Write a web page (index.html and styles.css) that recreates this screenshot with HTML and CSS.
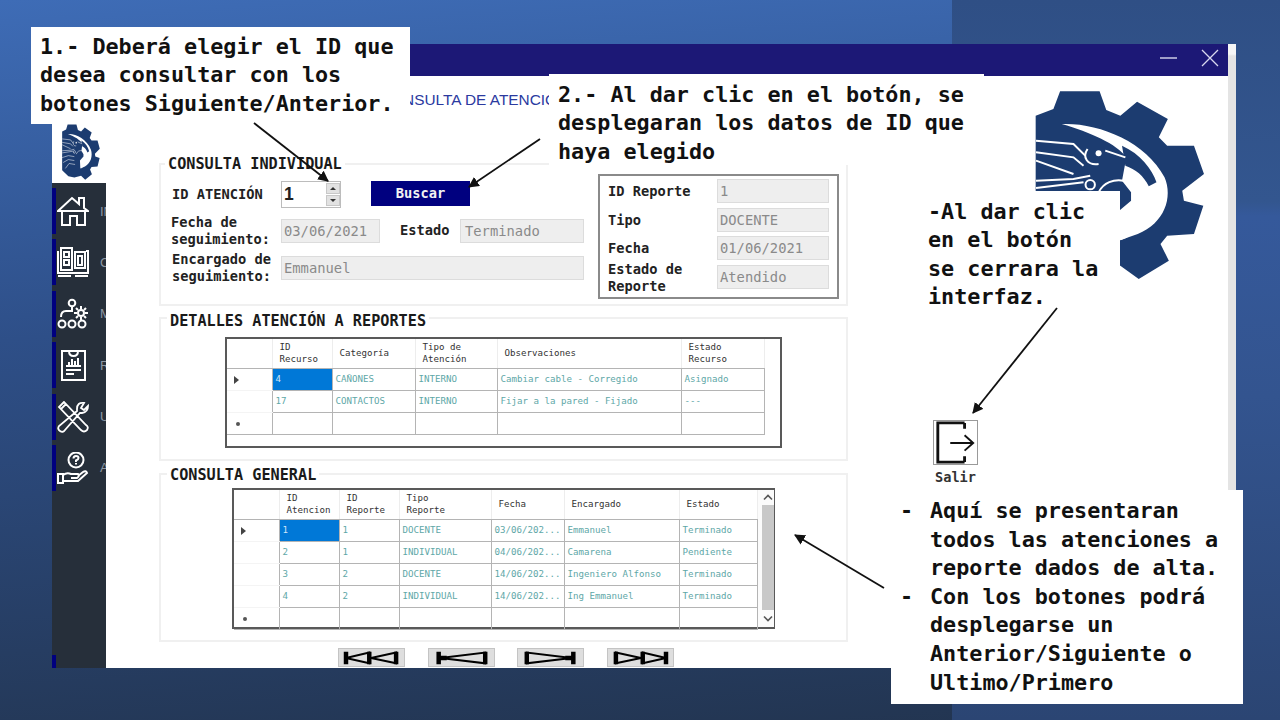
FILE: index.html
```html
<!DOCTYPE html>
<html lang="es">
<head>
<meta charset="utf-8">
<title>Consulta de atención a reportes</title>
<link rel="stylesheet" href="styles.css">
</head>
<body>
<svg class="defs" aria-hidden="true">
  <symbol id="logo" viewBox="555 268 508 570" preserveAspectRatio="none">
    <path class="logo-gear" d="M557 345 L610 325 L630 272 L748 272 L768 328 L810 345 L860 303 L952 355 L925 410 L950 435 L1030 435 L1060 520 L995 570 L1000 600 L1058 615 L1030 700 L950 705 L930 730 L955 780 L865 835 L810 795 L720 812 L640 800 L557 740 Z"/>
    <path class="logo-white" d="M635 370 C740 365 885 420 942 530 C968 590 942 668 862 700 L800 722 L795 640 L842 600 L842 575 L815 540 L828 470 C800 430 720 395 635 370 Z"/>
    <path class="logo-gear" d="M815 435 C870 460 905 505 918 545 L895 557 C880 525 855 505 825 495 Z"/>
    <path class="logo-line" d="M765 450 L825 470"/>
    <path class="logo-line" d="M558 420 L670 430 L705 465 M558 455 L670 470 L700 495 M558 480 L670 520 M558 540 L670 535 L720 525 M558 562 L700 545 M557 610 L640 590 L720 600 M570 660 L640 630 L720 640 M600 720 L650 670 L730 680"/>
    <path class="logo-line" d="M712 445 C695 470 712 495 745 490"/>
    <circle class="logo-dot" cx="745" cy="458" r="9"/>
    <circle class="logo-line" cx="720" cy="552" r="14"/>
    <path class="logo-line" d="M745 575 C760 545 790 535 820 540"/>
    <path class="logo-line" d="M810 650 C860 650 865 700 810 716"/>
  </symbol>
</svg>

<main class="slide">
  <div class="slide-panel"></div>

  <div class="scroll-strip"></div>

  <article class="window">
    <header class="titlebar">
      <svg class="win-icon" viewBox="0 0 17 17"><path d="M0 9 H17"/></svg>
      <svg class="win-icon win-close" viewBox="0 0 18 18"><path d="M1 1 L17 17 M17 1 L1 17"/></svg>
    </header>
    <div class="window-body">
      <aside class="rail">
        <div class="rail-logo"><svg class="logo-small"><use href="#logo"/></svg></div>
        <nav class="sidebar">
          <div class="nav-item">
            <svg class="nav-icon" viewBox="0 0 32 32"><path d="M1 16 L15 3 L22 9 V3 H27 V13 L31 16 Z M5 16 V30 H13 V21 H20 V30 H28 V16"/></svg>
            <span>IN</span>
          </div>
          <div class="nav-item">
            <svg class="nav-icon" viewBox="0 0 32 32"><path d="M1 5 V27 H31 V5 H29 M4 2 H15 V24 H4 Z M7 6 H12 V11 H7 Z M7 14 H12 V19 H7 Z M18 6 H28 V22 H18 Z M21 10 H25 V19 H21 Z M1 30 H14 M18 30 H31"/></svg>
            <span>C</span>
          </div>
          <div class="nav-item">
            <svg class="nav-icon" viewBox="0 0 32 32"><circle cx="15" cy="5" r="3.3"/><path d="M15 9 V13 H9 Q4 13 4 19"/><circle cx="24" cy="15" r="3"/><path d="M24 8 V11 M24 19 V22 M17 15 H20 M28 15 H31 M19 10 L21 12 M27 18 L29 20 M29 10 L27 12 M21 18 L19 20"/><circle cx="5" cy="26" r="3.5"/><circle cx="15" cy="26" r="3.5"/><circle cx="25" cy="26" r="3.5"/></svg>
            <span>M</span>
          </div>
          <div class="nav-item">
            <svg class="nav-icon" viewBox="0 0 32 32"><path d="M5 2 H28 V31 H5 Z M12 2 Q12 7 16.5 7 Q21 7 21 2 M9 17 H24 M9 21 H24 M9 25 H17 M12 16 V13 M15 16 V10 M18 16 V12 M21 16 V9"/></svg>
            <span>R</span>
          </div>
          <div class="nav-item">
            <svg class="nav-icon nav-icon-tools" viewBox="0 0 32 32"><path d="M7 1 L2 6 L24 29 Q27 32 30 29 Q32 26 29 24 Z M4 8 L9 3 M27 2 Q20 1 20 8 L20 10 L2 25 Q0 28 3 30 Q6 32 8 29 L23 12 L25 12 Q31 11 31 5 L27 9 L24 7 Z"/></svg>
            <span>U</span>
          </div>
          <div class="nav-item">
            <svg class="nav-icon" viewBox="0 0 32 32"><circle cx="19" cy="8" r="7.5"/><path d="M16.5 6.5 Q16.5 4 19 4 Q21.5 4 21.5 6 Q21.5 7.5 19 8.5 V10 M19 11 V12.5"/><path d="M1 22 H6 V31 H1 Z M6 23 Q10 20 14 22 H21 Q23 24 20 26 H14 M6 29 H21 L30 21 Q29 18 26 20 L21 24"/></svg>
            <span>A</span>
          </div>
          <div class="nav-item nav-item-last">
            <svg class="nav-icon" viewBox="0 0 32 32"><circle cx="18" cy="16" r="9"/></svg>
          </div>
        </nav>
      </aside>

      <div class="content">
        <h1 class="page-title">CONSULTA DE ATENCIÓN A REPORTES</h1>

        <section class="group group-one">
          <h2 class="legend legend-one">CONSULTA INDIVIDUAL</h2>
          <div class="individual">
            <form class="form">
              <label class="form-label form-label-id">ID ATENCIÓN</label>
              <div class="spinner">
                <span class="spinner-value">1</span>
                <span class="spinner-buttons">
                  <span class="spin spin-up"></span>
                  <span class="spin spin-down"></span>
                </span>
              </div>
              <button type="button" class="search">Buscar</button>

              <label class="form-label">Fecha de<br>seguimiento:</label>
              <span class="field field-date">03/06/2021</span>
              <label class="form-label form-label-state">Estado</label>
              <span class="field field-state">Terminado</span>

              <label class="form-label form-label-owner">Encargado de<br>seguimiento:</label>
              <span class="field field-owner">Emmanuel</span>
            </form>
            <div class="report">
              <label class="form-label">ID Reporte</label><span class="field">1</span>
              <label class="form-label">Tipo</label><span class="field">DOCENTE</span>
              <label class="form-label">Fecha</label><span class="field">01/06/2021</span>
              <label class="form-label">Estado de<br>Reporte</label><span class="field">Atendido</span>
            </div>
          </div>
        </section>

        <section class="group group-two">
          <h2 class="legend legend-two">DETALLES ATENCIÓN A REPORTES</h2>
          <div class="grid-frame grid-frame-one">
            <table class="grid grid-one">
              <colgroup>
                <col class="c45"><col class="c60"><col class="c83"><col class="c82"><col class="c184"><col class="c83">
              </colgroup>
              <thead>
                <tr><th></th><th>ID<br>Recurso</th><th>Categoría</th><th>Tipo de<br>Atención</th><th>Observaciones</th><th>Estado<br>Recurso</th></tr>
              </thead>
              <tbody>
                <tr><td class="row-head row-current"></td><td class="selected">4</td><td>CAÑONES</td><td>INTERNO</td><td>Cambiar cable - Corregido</td><td>Asignado</td></tr>
                <tr><td class="row-head"></td><td>17</td><td>CONTACTOS</td><td>INTERNO</td><td>Fijar a la pared - Fijado</td><td>---</td></tr>
                <tr><td class="row-head row-new"></td><td></td><td></td><td></td><td></td><td></td></tr>
              </tbody>
            </table>
          </div>
        </section>

        <section class="group group-three">
          <h2 class="legend">CONSULTA GENERAL</h2>
          <div class="grid-frame grid-frame-two">
            <table class="grid grid-two">
              <colgroup>
                <col class="c45"><col class="c60"><col class="c60"><col class="c92"><col class="c73"><col class="c115"><col class="c78">
              </colgroup>
              <thead>
                <tr><th></th><th>ID<br>Atencion</th><th>ID<br>Reporte</th><th>Tipo<br>Reporte</th><th>Fecha</th><th>Encargado</th><th>Estado</th></tr>
              </thead>
              <tbody>
                <tr><td class="row-head row-current"></td><td class="selected">1</td><td>1</td><td>DOCENTE</td><td>03/06/202...</td><td>Emmanuel</td><td>Terminado</td></tr>
                <tr><td class="row-head"></td><td>2</td><td>1</td><td>INDIVIDUAL</td><td>04/06/202...</td><td>Camarena</td><td>Pendiente</td></tr>
                <tr><td class="row-head"></td><td>3</td><td>2</td><td>DOCENTE</td><td>14/06/202...</td><td>Ingeniero Alfonso</td><td>Terminado</td></tr>
                <tr><td class="row-head"></td><td>4</td><td>2</td><td>INDIVIDUAL</td><td>14/06/202...</td><td>Ing Emmanuel</td><td>Terminado</td></tr>
                <tr><td class="row-head row-new"></td><td></td><td></td><td></td><td></td><td></td><td></td></tr>
              </tbody>
            </table>
            <div class="scrollbar">
              <svg class="scroll-arrow" viewBox="0 0 10 6"><path d="M1 5 L5 1 L9 5"/></svg>
              <div class="scroll-thumb"></div>
              <svg class="scroll-arrow" viewBox="0 0 10 6"><path d="M1 1 L5 5 L9 1"/></svg>
            </div>
          </div>
        </section>

        <div class="pager">
          <button type="button" class="page-btn" aria-label="Primero"><svg viewBox="0 0 67 19"><path class="pg-thick" d="M5 3 V17 M31 3 V17 M61 3 V17"/><path class="pg-thin" d="M5 10 L31 4 V16 Z M33 10 L61 4 V16 Z"/></svg></button>
          <button type="button" class="page-btn" aria-label="Anterior"><svg viewBox="0 0 67 19"><path class="pg-thick" d="M8 3 V17 M60 3 V17 M8 10 H17"/><path class="pg-thin" d="M10 10 L60 4 V16 Z"/></svg></button>
          <button type="button" class="page-btn" aria-label="Siguiente"><svg viewBox="0 0 67 19"><path class="pg-thick" d="M59 3 V17 M7 3 V17 M50 10 H59"/><path class="pg-thin" d="M57 10 L7 4 V16 Z"/></svg></button>
          <button type="button" class="page-btn" aria-label="Último"><svg viewBox="0 0 67 19"><path class="pg-thick" d="M62 3 V17 M36 3 V17 M6 3 V17"/><path class="pg-thin" d="M62 10 L36 4 V16 Z M34 10 L6 4 V16 Z"/></svg></button>
        </div>
      </div>

      <div class="side">
        <svg class="logo-big"><use href="#logo"/></svg>
        <div class="exit">
          <div class="exit-box">
            <svg viewBox="0 0 45 45"><path class="exit-door" d="M32 2 V8 M32 37 V43 M32 2 H4 V43 H32"/><path class="exit-arrow" d="M17 23 H41 M32 15 L41 23 L32 31"/></svg>
          </div>
          <span class="exit-label">Salir</span>
        </div>
      </div>
    </div>
  </article>

  <svg class="arrows" viewBox="0 0 1280 720" aria-hidden="true">
    <defs>
      <marker id="head" viewBox="0 0 10 10" refX="9" refY="5" markerWidth="6" markerHeight="6" orient="auto-start-reverse">
        <path class="arrow-head" d="M0 0 L10 5 L0 10 Z"/>
      </marker>
    </defs>
    <line class="arrow" x1="254" y1="123" x2="328" y2="181" marker-end="url(#head)"/>
    <line class="arrow" x1="540" y1="139" x2="469" y2="187" marker-end="url(#head)"/>
    <line class="arrow" x1="1057" y1="308" x2="973" y2="413" marker-end="url(#head)"/>
    <line class="arrow" x1="884" y1="588" x2="795" y2="535" marker-end="url(#head)"/>
  </svg>

  <p class="note note-one">1.- Deberá elegir el ID que<br>desea consultar con los<br>botones Siguiente/Anterior.</p>
  <p class="note note-two">2.- Al dar clic en el botón, se<br>desplegaran los datos de ID que<br>haya elegido</p>
  <p class="note note-three">-Al dar clic<br>en el botón<br>se cerrara la<br>interfaz.</p>
  <ul class="note note-four">
    <li>Aquí se presentaran<br>todos las atenciones a<br>reporte dados de alta.</li>
    <li>Con los botones podrá<br>desplegarse un<br>Anterior/Siguiente o<br>Ultimo/Primero</li>
  </ul>
</main>
</body>
</html>
```

FILE: styles.css
```css
* { box-sizing: border-box; }

html, body {
  margin: 0;
  padding: 0;
  width: 1280px;
  height: 720px;
  overflow: hidden;
}

.defs { position: absolute; width: 0; height: 0; }

.slide {
  position: relative;
  width: 1280px;
  height: 720px;
  overflow: hidden;
  background: linear-gradient(176deg, #3e6cb6 0%, #2e4f88 42%, #22344f 100%);
  font-family: "DejaVu Sans Mono", monospace;
  color: #111;
}

.slide-panel {
  position: absolute;
  left: 952px;
  top: 0;
  width: 328px;
  height: 720px;
  background: linear-gradient(180deg, #2f4f85 0%, #33568f 28%, #35599b 30%, #33548f 55%, #2b4573 100%);
}

.scroll-strip {
  position: absolute;
  left: 1228px;
  top: 44px;
  width: 8px;
  height: 446px;
  background: linear-gradient(180deg, #f6f6f6 0, #f6f6f6 10px, #e4e4e4 12px);
}

/* Window */
.window {
  position: absolute;
  left: 52px;
  top: 44px;
  width: 1176px;
  height: 624px;
  display: flex;
  flex-direction: column;
  background: #fff;
  overflow: hidden;
}

.titlebar {
  flex: 0 0 32px;
  display: flex;
  justify-content: flex-end;
  align-items: flex-start;
  gap: 24px;
  padding: 5px 9px 0 0;
  background: #1c1876;
}

.win-icon { width: 17px; height: 17px; fill: none; stroke: #d8d8ee; stroke-width: 1.4; }
.win-close { width: 18px; height: 18px; stroke-width: 1.3; }

.window-body { flex: 1; display: flex; min-height: 0; }

/* Left rail */
.rail { flex: 0 0 54px; width: 54px; min-width: 0; display: flex; flex-direction: column; overflow: hidden; }
.rail-logo { flex: 0 0 107px; padding: 48px 0 0 10px; }
.logo-small { display: block; width: 38px; height: 56px; }

.sidebar {
  flex: 1;
  min-height: 0;
  display: flex;
  flex-direction: column;
  gap: 5.4px;
  padding-top: 5px;
  background: #262f3a;
  overflow: hidden;
}

.nav-item {
  flex: 0 0 46px;
  display: flex;
  align-items: center;
  gap: 11px;
  border-left: 4px solid #00007f;
  padding-left: 1px;
  overflow: hidden;
  white-space: nowrap;
  color: #8d97a3;
  font: 13px "Liberation Sans", sans-serif;
}

.nav-item-last { margin-top: 158.6px; }

.nav-icon {
  flex: 0 0 32px;
  width: 32px;
  height: 32px;
  fill: none;
  stroke: #fff;
  stroke-width: 2;
}
.nav-icon-tools { stroke-width: 1.8; }

/* Content */
.content { flex: 0 0 742px; min-width: 0; padding-left: 53px; }

.page-title {
  margin: 0;
  height: 87px;
  padding: 15px 0 0 221px;
  font: 400 15.4px/18px "Liberation Sans", sans-serif;
  color: #2b3a9f;
  white-space: nowrap;
}

.group {
  position: relative;
  width: 689px;
  border: 2px solid #f0f0f0;
}
.group-one { height: 143px; }
.group-two { height: 144px; margin-top: 11px; padding: 18px 0 0 64px; }
.group-three { height: 169px; margin-top: 12px; padding: 13px 0 0 71px; }

.legend {
  position: absolute;
  left: 6px;
  top: -9px;
  margin: 0;
  padding: 0 3px;
  background: #fff;
  font: 700 15.2px/18px "DejaVu Sans Mono", monospace;
  color: #1a1a1a;
  white-space: nowrap;
}
.legend-one { left: 4px; top: -10px; }
.legend-two { top: -7px; }

.individual {
  display: flex;
  align-items: flex-start;
  gap: 14px;
  padding: 9px 0 0 10px;
}

.form {
  flex: 0 0 413px;
  display: grid;
  grid-template-columns: 110px 90px 29px 60px 124px;
  grid-template-rows: 30px 34px 34px;
  row-gap: 3px;
  margin-top: 7px;
  align-items: center;
}

.form-label {
  font: 700 13.7px/17.5px "DejaVu Sans Mono", monospace;
  color: #222;
  white-space: nowrap;
  display: flex;
  align-items: center;
}
.form-label-id { padding-left: 1px; height: 27px; align-self: start; }
.form-label-state { grid-column: 4; }
.form-label-owner { padding-left: 1px; }

.spinner {
  display: flex;
  justify-content: space-between;
  align-self: start;
  width: 60px;
  height: 27px;
  border: 1px solid #bcbcbc;
  background: #fff;
  padding-left: 2px;
  font: 700 17.5px/25px "Liberation Sans", sans-serif;
  color: #222;
}
.spinner-buttons { display: flex; flex-direction: column; gap: 1px; width: 14px; padding: 1px 0; }
.spin { position: relative; flex: 1; background: #e2e2e2; border: 1px solid #c8c8c8; }
.spin::after {
  content: "";
  position: absolute;
  left: 3px;
  top: 3px;
  border-left: 3px solid transparent;
  border-right: 3px solid transparent;
}
.spin-up::after { border-bottom: 3px solid #333; }
.spin-down::after { border-top: 3px solid #333; }

.search {
  grid-column: 3 / 6;
  justify-self: start;
  align-self: start;
  width: 99px;
  height: 25px;
  border: 0;
  padding: 0;
  background: #00007f;
  color: #f2f2f2;
  font: 700 13.7px/25px "DejaVu Sans Mono", monospace;
}

.field {
  display: block;
  height: 24px;
  padding-left: 2px;
  background: #eeeeee;
  border: 1px solid #dcdcdc;
  font: 400 13.8px/22px "DejaVu Sans Mono", monospace;
  color: #8a8a8a;
  white-space: nowrap;
}
.field-date { grid-column: 2; width: 99px; }
.field-state { grid-column: 5; width: 124px; padding-left: 4px; }
.field-owner { grid-column: 2 / 6; width: 303px; }

.report {
  flex: 0 0 241px;
  height: 125px;
  display: grid;
  grid-template-columns: 109px 112px;
  grid-auto-rows: 24px;
  row-gap: 4.6px;
  padding: 3px 0 0 8px;
  border: 2px solid #8a8a8a;
}
.report .form-label { padding-top: 2px; }
.report .form-label:nth-last-child(2) { padding-top: 3px; }

/* Data grids */
.grid-frame {
  position: relative;
  display: flex;
  background: #fff;
  border: 2px solid #595959;
}
.grid-frame-one { width: 557px; height: 111px; }
.grid-frame-two { width: 543px; height: 141px; }

.grid {
  border-collapse: collapse;
  table-layout: fixed;
  font: 400 9.15px/12px "DejaVu Sans Mono", monospace;
  height: 0;
}
.grid-one { width: 537px; }
.grid-two { width: 523px; }

.c45 { width: 45px; }
.c60 { width: 60px; }
.c73 { width: 73px; }
.c78 { width: 78px; }
.c82 { width: 82px; }
.c83 { width: 83px; }
.c92 { width: 92px; }
.c115 { width: 115px; }
.c184 { width: 184px; }

.grid th {
  height: 29px;
  padding: 0 0 0 7px;
  text-align: left;
  font-weight: 400;
  color: #333;
  border-right: 1px solid #ededed;
  border-bottom: 1px solid #b4b4b4;
  white-space: nowrap;
}

.grid td {
  height: 22px;
  padding: 0 0 0 3px;
  color: #5ea7a7;
  border-right: 1px solid #b4b4b4;
  border-bottom: 1px solid #b4b4b4;
  white-space: nowrap;
  overflow: hidden;
}

.grid td.row-head { position: relative; border-bottom-color: #f4f4f4; }
.grid tr:last-child td.row-head { border-bottom-color: #b4b4b4; }

.row-current::before {
  content: "";
  position: absolute;
  left: 7px;
  top: 7px;
  border-left: 5px solid #444;
  border-top: 4px solid transparent;
  border-bottom: 4px solid transparent;
}
.row-new::before {
  content: "";
  position: absolute;
  left: 9px;
  top: 9px;
  width: 4px;
  height: 4px;
  border-radius: 50%;
  background: #555;
}

.grid td.selected { background: #0078d7; color: #cfe6f7; }

.scrollbar {
  flex: 0 0 16px;
  display: flex;
  flex-direction: column;
  align-items: flex-end;
  background: #fbfbfb;
}
.scroll-arrow {
  flex: 0 0 15px;
  width: 10px;
  height: 15px;
  margin-right: 1px;
  fill: none;
  stroke: #555;
  stroke-width: 1.6;
}
.scroll-arrow:last-child { flex-basis: 17px; height: 17px; }
.scroll-thumb { flex: 1; width: 12px; background: #c8c8c8; }

/* Pager */
.pager { display: flex; gap: 22.7px; margin: 6px 0 0 179px; }
.page-btn {
  flex: 0 0 67px;
  height: 19px;
  padding: 0;
  background: #dedede;
  border: 1px solid #c4c4c4;
}
.page-btn svg { display: block; width: 65px; height: 17px; fill: none; stroke: #000; }
.pg-thick { stroke-width: 5; }
.pg-thin { stroke-width: 2.2; }

/* Right side */
.side { flex: 1; min-width: 0; display: flex; flex-direction: column; align-items: flex-start; padding-left: 187px; }
.logo-big { display: block; width: 170px; height: 190px; margin-top: 14px; flex: none; }
.logo-gear { fill: #1c3c70; }
.logo-white { fill: #fff; }
.logo-dot { fill: #fff; }
.logo-line { fill: none; stroke: #fff; stroke-width: 6; }

.exit {
  margin: 140px 0 0 -102px;
  width: 45px;
  display: flex;
  flex-direction: column;
  align-items: center;
}
.exit-box { width: 45px; height: 45px; border: 1px solid #9a9a9a; }
.exit-box svg { display: block; width: 43px; height: 43px; fill: none; stroke: #111; }
.exit-door { stroke-width: 3; }
.exit-arrow { stroke-width: 2; }
.exit-label {
  margin-top: 4px;
  font: 700 13.6px/16px "DejaVu Sans Mono", monospace;
  color: #333;
}

/* Annotation layer */
.arrows {
  position: absolute;
  left: 0;
  top: 0;
  width: 1280px;
  height: 720px;
  pointer-events: none;
  z-index: 3;
}
.arrow { stroke: #111; stroke-width: 1.8; }
.arrow-head { fill: #111; }

.note {
  position: absolute;
  margin: 0;
  background: #fff;
  font: 700 21.76px/28.6px "DejaVu Sans Mono", monospace;
  color: #111;
  white-space: nowrap;
  z-index: 2;
}
.note-one { left: 31px; top: 27px; width: 379px; height: 97px; padding: 5.5px 0 0 9px; }
.note-two { left: 549px; top: 74px; width: 435px; height: 91px; padding: 6.5px 0 0 9px; }
.note-three { left: 920px; top: 191px; width: 200px; height: 117px; padding: 6.5px 0 0 8px; }
.note-four {
  left: 891px;
  top: 490px;
  width: 352px;
  height: 214px;
  padding: 7px 0 0 39px;
  list-style: none;
}
.note-four li { position: relative; }
.note-four li::before {
  content: "-";
  position: absolute;
  left: -30px;
  top: 0;
}
```
